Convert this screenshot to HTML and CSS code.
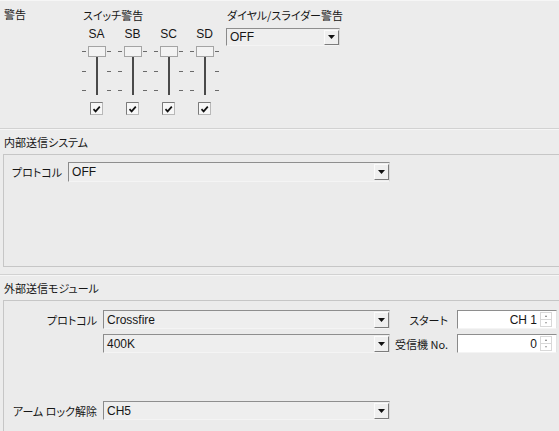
FILE: index.html
```html
<!DOCTYPE html>
<html lang="ja">
<head>
<meta charset="utf-8">
<link rel="stylesheet" href="styles.css">
</head>
<body>
<div class="app">
<div class="top">
  <div class="warn-col"><div class="jp">警告</div></div>
  <div class="switch-col">
    <div class="sub-title jp">スイッチ警告</div>
    <div class="sliders">
      <div class="slider">
        <div class="sl-name">SA</div>
        <svg class="sl-track" width="36" height="53" viewBox="0 0 36 53">
          <path d="M3 7.5h4M28 7.5h4M3 27.5h4M28 27.5h4M3 46.5h4M28 46.5h4" stroke="#6a6a6a" stroke-width="1"/>
          <rect x="17" y="13" width="2" height="38" fill="#4a4a4a"/>
          <rect x="9.5" y="2.5" width="17" height="10" fill="#f3f3f3" stroke="#a4a4a4"/>
        </svg>
        <svg class="check" width="13" height="13" viewBox="0 0 13 13">
          <rect x="0.5" y="0.5" width="12" height="12" fill="#f7f7f7" stroke="#b8b8b8"/>
          <path d="M0.5 12.5V0.5H12.5" fill="none" stroke="#7a7a7a"/>
          <path d="M3.5 7.2L5.6 9.4L9.8 4.6" fill="none" stroke="#111" stroke-width="1.7"/>
        </svg>
      </div>
      <div class="slider">
        <div class="sl-name">SB</div>
        <svg class="sl-track" width="36" height="53" viewBox="0 0 36 53">
          <path d="M3 7.5h4M28 7.5h4M3 27.5h4M28 27.5h4M3 46.5h4M28 46.5h4" stroke="#6a6a6a" stroke-width="1"/>
          <rect x="17" y="13" width="2" height="38" fill="#4a4a4a"/>
          <rect x="9.5" y="2.5" width="17" height="10" fill="#f3f3f3" stroke="#a4a4a4"/>
        </svg>
        <svg class="check" width="13" height="13" viewBox="0 0 13 13">
          <rect x="0.5" y="0.5" width="12" height="12" fill="#f7f7f7" stroke="#b8b8b8"/>
          <path d="M0.5 12.5V0.5H12.5" fill="none" stroke="#7a7a7a"/>
          <path d="M3.5 7.2L5.6 9.4L9.8 4.6" fill="none" stroke="#111" stroke-width="1.7"/>
        </svg>
      </div>
      <div class="slider">
        <div class="sl-name">SC</div>
        <svg class="sl-track" width="36" height="53" viewBox="0 0 36 53">
          <path d="M3 7.5h4M28 7.5h4M3 27.5h4M28 27.5h4M3 46.5h4M28 46.5h4" stroke="#6a6a6a" stroke-width="1"/>
          <rect x="17" y="13" width="2" height="38" fill="#4a4a4a"/>
          <rect x="9.5" y="2.5" width="17" height="10" fill="#f3f3f3" stroke="#a4a4a4"/>
        </svg>
        <svg class="check" width="13" height="13" viewBox="0 0 13 13">
          <rect x="0.5" y="0.5" width="12" height="12" fill="#f7f7f7" stroke="#b8b8b8"/>
          <path d="M0.5 12.5V0.5H12.5" fill="none" stroke="#7a7a7a"/>
          <path d="M3.5 7.2L5.6 9.4L9.8 4.6" fill="none" stroke="#111" stroke-width="1.7"/>
        </svg>
      </div>
      <div class="slider">
        <div class="sl-name">SD</div>
        <svg class="sl-track" width="36" height="53" viewBox="0 0 36 53">
          <path d="M3 7.5h4M28 7.5h4M3 27.5h4M28 27.5h4M3 46.5h4M28 46.5h4" stroke="#6a6a6a" stroke-width="1"/>
          <rect x="17" y="13" width="2" height="38" fill="#4a4a4a"/>
          <rect x="9.5" y="2.5" width="17" height="10" fill="#f3f3f3" stroke="#a4a4a4"/>
        </svg>
        <svg class="check" width="13" height="13" viewBox="0 0 13 13">
          <rect x="0.5" y="0.5" width="12" height="12" fill="#f7f7f7" stroke="#b8b8b8"/>
          <path d="M0.5 12.5V0.5H12.5" fill="none" stroke="#7a7a7a"/>
          <path d="M3.5 7.2L5.6 9.4L9.8 4.6" fill="none" stroke="#111" stroke-width="1.7"/>
        </svg>
      </div>
    </div>
  </div>
  <div class="dial-col">
    <div class="sub-title jp">ダイヤル/スライダー警告</div>
    <div class="combo dial-combo">
      <span class="val">OFF</span>
      <span class="arrow"><svg width="7" height="4" viewBox="0 0 7 4"><path d="M0 0H7L3.5 4Z" fill="#111"/></svg></span>
    </div>
  </div>
</div>

<div class="sep"></div>
<div class="sec-title jp">内部送信システム</div>
<div class="panel panel-int">
  <div class="int-row">
    <span class="jp label">プロトコル</span>
    <div class="combo int-combo">
      <span class="val">OFF</span>
      <span class="arrow"><svg width="7" height="4" viewBox="0 0 7 4"><path d="M0 0H7L3.5 4Z" fill="#111"/></svg></span>
    </div>
  </div>
</div>

<div class="sep sep2"></div>
<div class="sec-title jp">外部送信モジュール</div>
<div class="panel panel-ext">
  <div class="ext-grid">
    <span class="jp label r-label">プロトコル</span>
    <div class="combo">
      <span class="val">Crossfire</span>
      <span class="arrow"><svg width="7" height="4" viewBox="0 0 7 4"><path d="M0 0H7L3.5 4Z" fill="#111"/></svg></span>
    </div>
    <span class="jp label r-label2">スタート</span>
    <div class="spin">
      <span class="spin-val">CH 1</span>
      <span class="spinner"><span class="sp-up"></span><span class="sp-down"></span></span>
    </div>

    <span></span>
    <div class="combo">
      <span class="val">400K</span>
      <span class="arrow"><svg width="7" height="4" viewBox="0 0 7 4"><path d="M0 0H7L3.5 4Z" fill="#111"/></svg></span>
    </div>
    <span class="jp label r-label2">受信機 No.</span>
    <div class="spin">
      <span class="spin-val">0</span>
      <span class="spinner"><span class="sp-up"></span><span class="sp-down"></span></span>
    </div>
  </div>
  <div class="arm-grid">
    <span class="jp label r-label">アーム ロック解除</span>
    <div class="combo">
      <span class="val">CH5</span>
      <span class="arrow"><svg width="7" height="4" viewBox="0 0 7 4"><path d="M0 0H7L3.5 4Z" fill="#111"/></svg></span>
    </div>
  </div>
</div>
</div>
</body>
</html>
```

FILE: styles.css
```css
html, body {
  margin: 0;
  padding: 0;
  background: #ececec;
}
.app {
  width: 559px;
  height: 431px;
  overflow: hidden;
  background: #ececec;
  color: #161616;
  font-family: "Liberation Sans", "Noto Sans CJK JP", sans-serif;
  font-size: 12px;
}
.jp {
  font-family: "Noto Sans CJK JP", "Liberation Sans", sans-serif;
  font-size: 11px;
  font-feature-settings: "palt";
  line-height: 14px;
}

/* top warnings area */
.top {
  height: 128px;
  display: flex;
  border-top: 1px solid #f6f6f6;
  box-sizing: border-box;
}
.warn-col {
  width: 79px;
  padding: 6px 0 0 4px;
  box-sizing: border-box;
}
.switch-col {
  width: 147px;
}
.sub-title {
  padding: 7px 0 0 4px;
}
.dial-col .sub-title {
  padding-left: 1px;
}
.sliders {
  display: flex;
}
.slider {
  width: 36px;
  display: flex;
  flex-direction: column;
}
.sl-name {
  margin-top: 5px;
  line-height: 15px;
  font-size: 12px;
  text-align: center;
  padding-right: 1px;
}
.sl-track {
  display: block;
  margin-top: 2px;
}
.check {
  display: block;
  margin: 5px 0 0 11px;
}

/* combos */
.combo {
  display: flex;
  align-items: center;
  height: 19px;
  box-sizing: border-box;
  background: #eeeeee;
  border-top: 1px solid #8e8e8e;
  border-left: 1px solid #8a8a8a;
  border-right: 1px solid #d8d8d8;
  border-bottom: 1px solid #f4f4f4;
  padding-left: 3px;
  font-size: 12px;
}
.combo .val {
  line-height: 14px;
}
.combo .arrow {
  margin-left: auto;
  width: 15px;
  height: 16px;
  box-sizing: border-box;
  display: flex;
  align-items: center;
  justify-content: center;
  border-top: 1px solid #fbfbfb;
  border-left: 1px solid #fbfbfb;
  border-right: 1px solid #7c7c7c;
  border-bottom: 1px solid #7c7c7c;
  background: #efefef;
}
.dial-combo {
  width: 114px;
  height: 18px;
  margin-top: 6px;
}
.dial-combo .arrow {
  height: 15px;
}

/* separators and sections */
.sep {
  border-top: 1px solid #d2d2d2;
  border-bottom: 1px solid #f6f6f6;
}
.sep2 {
  margin-top: 7px;
}
.sec-title {
  padding: 5px 0 5px 4px;
}
.panel {
  margin-left: 3px;
  margin-right: -20px;
  border: 1px solid #c6c6c6;
  border-right: none;
  box-sizing: border-box;
  background: #ebebeb;
}
.panel-int {
  height: 113px;
  padding: 7px 0 0 8px;
}
.int-row {
  display: flex;
  align-items: center;
  gap: 6px;
}
.int-combo {
  width: 322px;
  height: 20px;
}
.label {
  white-space: nowrap;
}

.panel-ext {
  height: 140px;
  padding: 9px 0 0 8px;
}
.ext-grid {
  display: grid;
  grid-template-columns: 91px 287px 67px 100px;
  grid-template-rows: 19px 19px;
  row-gap: 5px;
  align-items: center;
}
.arm-grid {
  display: grid;
  grid-template-columns: 91px 287px;
  grid-template-rows: 19px;
  align-items: center;
  margin-top: 48px;
}
.r-label {
  text-align: right;
  padding-right: 6px;
}
.r-label2 {
  text-align: right;
  padding-right: 9px;
}
.spin {
  display: flex;
  align-items: center;
  height: 19px;
  box-sizing: border-box;
  background: #ffffff;
  border-top: 1px solid #8e8e8e;
  border-left: 1px solid #8a8a8a;
  border-right: 1px solid #e4e4e4;
  border-bottom: 1px solid #f4f4f4;
  font-size: 12px;
}
.spin-val {
  flex: 1;
  text-align: right;
  padding-right: 3px;
  line-height: 14px;
}
.spinner {
  width: 12px;
  height: 15px;
  margin-right: 4px;
  display: flex;
  flex-direction: column;
  border: 1px solid #d8d8d8;
  box-sizing: border-box;
}
.sp-up, .sp-down {
  flex: 1;
  display: flex;
  align-items: center;
  justify-content: center;
}
.sp-up {
  border-bottom: 1px solid #d8d8d8;
}
.sp-up::before {
  content: "";
  border-left: 1.5px solid transparent;
  border-right: 1.5px solid transparent;
  border-bottom: 2px solid #777;
}
.sp-down::before {
  content: "";
  border-left: 1.5px solid transparent;
  border-right: 1.5px solid transparent;
  border-top: 2px solid #999;
}
```
